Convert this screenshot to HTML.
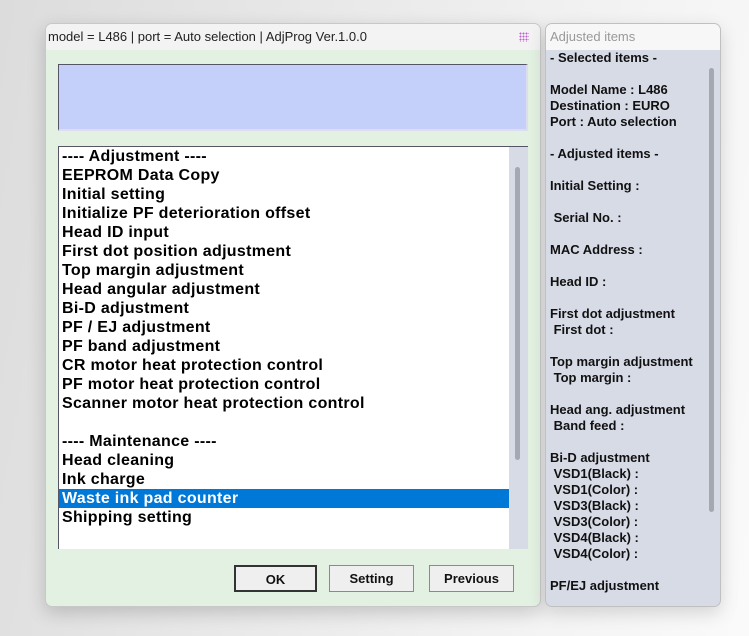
<!DOCTYPE html>
<html><head><style>
*{margin:0;padding:0;box-sizing:border-box}
body{width:749px;height:636px;overflow:hidden;background:linear-gradient(100deg,#dcdcdc 0%,#e9e9e9 40%,#f2f2f2 70%,#fafafa 100%);font-family:"Liberation Sans",Arial,sans-serif;position:relative}
.win{position:absolute;left:45px;top:23px;width:496px;height:584px;background:#e3f1e3;border:1px solid #c8c8c8;border-radius:7px;overflow:hidden;box-shadow:0 6px 18px rgba(0,0,0,.18)}
.tb{height:26px;background:#f3f3f3;font-size:13px;color:#222;padding:5px 0 0 2px;position:relative}
.dots{position:absolute;right:11px;top:8px;width:10px;height:10px;background-image:radial-gradient(circle,#c060d0 0.9px,transparent 1.1px);background-size:3px 3px}
.blue{position:absolute;left:12px;top:40px;width:470px;height:67px;background:#c5d0fa;border-top:1px solid #556;border-left:1px solid #556;border-right:2px solid #dde;border-bottom:2px solid #dde}
.list{position:absolute;left:12px;top:122px;width:470px;height:403px;background:#fff;border-top:1px solid #556;border-left:1px solid #556}
.sb{position:absolute;right:0;top:0;width:19px;height:100%;background:#d7dbe6}
.th{position:absolute;left:6px;top:20px;width:5px;height:293px;background:#a4a8b0;border-radius:3px}
.it{font-size:16px;font-weight:bold;line-height:19px;padding-left:3px;color:#000;width:450px;white-space:nowrap;letter-spacing:0.3px}
.sel{background:#0078d7;color:#fff}
.btn{position:absolute;top:541px;height:27px;background:#efefef;border:1px solid #8a8a8a;font-size:13px;font-weight:bold;text-align:center;line-height:25px;color:#111}
.r{position:absolute;left:545px;top:23px;width:176px;height:584px;background:#d7dbe6;border:1px solid #c0c0c0;border-radius:7px;overflow:hidden;box-shadow:0 6px 18px rgba(0,0,0,.15)}
.rt{height:26px;background:#f7f7f7;color:#999;font-size:13px;padding:5px 0 0 4px}
.rb{font-size:13px;font-weight:bold;line-height:16px;color:#111;padding:0 0 0 4px;white-space:pre}
.rsb{position:absolute;left:163px;top:44px;width:5px;height:444px;background:#a4a8b0;border-radius:3px}
</style></head><body>
<div class="win">
<div class="tb">model = L486 | port = Auto selection | AdjProg Ver.1.0.0<div class="dots"></div></div>
<div class="blue"></div>
<div class="list">
<div class="it">---- Adjustment ----</div>
<div class="it">EEPROM Data Copy</div>
<div class="it">Initial setting</div>
<div class="it">Initialize PF deterioration offset</div>
<div class="it">Head ID input</div>
<div class="it">First dot position adjustment</div>
<div class="it">Top margin adjustment</div>
<div class="it">Head angular adjustment</div>
<div class="it">Bi-D adjustment</div>
<div class="it">PF / EJ adjustment</div>
<div class="it">PF band adjustment</div>
<div class="it">CR motor heat protection control</div>
<div class="it">PF motor heat protection control</div>
<div class="it">Scanner motor heat protection control</div>
<div class="it">&nbsp;</div>
<div class="it">---- Maintenance ----</div>
<div class="it">Head cleaning</div>
<div class="it">Ink charge</div>
<div class="it sel">Waste ink pad counter</div>
<div class="it">Shipping setting</div>
<div class="sb"><div class="th"></div></div>
</div>
<div class="btn" style="left:188px;width:83px;border:2px solid #333">OK</div>
<div class="btn" style="left:283px;width:85px">Setting</div>
<div class="btn" style="left:383px;width:85px">Previous</div>
</div>
<div class="r">
<div class="rt">Adjusted items</div>
<div class="rb">- Selected items -

Model Name : L486
Destination : EURO
Port : Auto selection

- Adjusted items -

Initial Setting :

 Serial No. :

MAC Address :

Head ID :

First dot adjustment
 First dot :

Top margin adjustment
 Top margin :

Head ang. adjustment
 Band feed :

Bi-D adjustment
 VSD1(Black) :
 VSD1(Color) :
 VSD3(Black) :
 VSD3(Color) :
 VSD4(Black) :
 VSD4(Color) :

PF/EJ adjustment</div>
<div class="rsb"></div>
</div>
</body></html>
